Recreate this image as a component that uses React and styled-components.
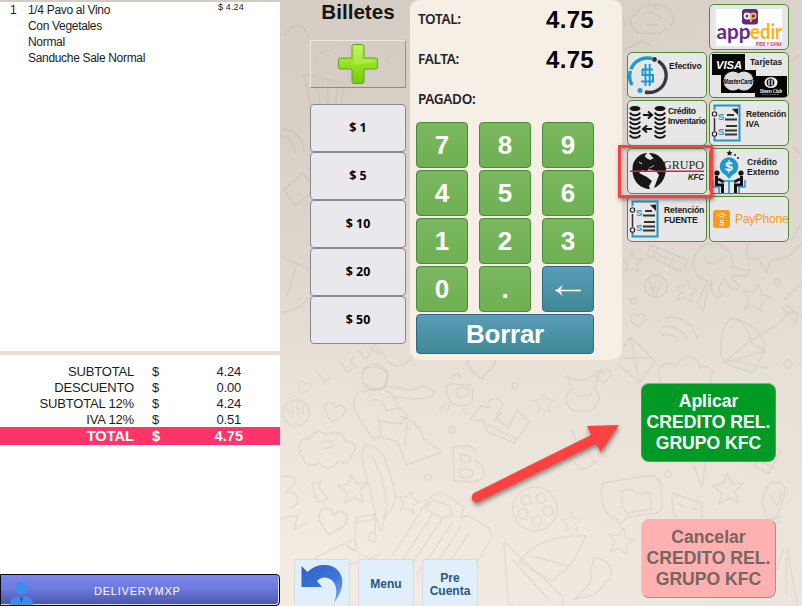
import React from "react";
import styled, { createGlobalStyle, css } from "styled-components";

const GlobalStyle = createGlobalStyle`
  *, *::before, *::after { box-sizing: border-box; }
  html, body { margin: 0; padding: 0; overflow: hidden; }
  button { font: inherit; margin: 0; padding: 0; }
`;

const sans = `"Liberation Sans", Arial, sans-serif`;
const humanist = `"Noto Sans", "Open Sans", sans-serif`;

const Screen = styled.main`
  position: relative;
  display: grid;
  grid-template-columns: 280px 1fr;
  width: 802px;
  height: 606px;
  overflow: hidden;
  font-family: ${sans};
  color: #111;
  background:
    linear-gradient(100deg, rgba(243, 236, 227, 0) 45%, rgba(228, 221, 212, 0.5) 100%),
    linear-gradient(178deg, #d5cdc3 0%, #d8d0c6 22%, #e0d8ce 45%, #ebe3d9 65%, #f3ebe2 88%, #f5ede4 100%);
`;

const Wallpaper = styled.svg`
  position: absolute;
  inset: 0;
  width: 802px;
  height: 606px;
  pointer-events: none;
`;

/* ---------- ticket ---------- */

const Ticket = styled.aside`
  position: relative;
  display: grid;
  grid-template-rows: 349px 219px 31px;
  padding-top: 2px;
  row-gap: 4px;
  height: 606px;
`;

const TicketLines = styled.section`
  background: #fff;
  display: grid;
  grid-template-columns: 18px 190px 1fr;
  align-content: start;
  padding-left: 10px;
  font-size: 12px;
  line-height: 16px;
  letter-spacing: -0.32px;
  color: #1c1c1c;
`;

const Price = styled.span`
  font-size: 9px;
  line-height: 10px;
  letter-spacing: 0.15px;
`;

const ItemNotes = styled.span`
  white-space: pre-line;
`;

const TicketFoot = styled.section`
  display: flex;
  flex-direction: column;
  background: #fff;
  padding-top: 8px;
`;

const SumRow = styled.div`
  display: grid;
  grid-template-columns: 134px 18px 1fr;
  align-items: center;
  height: ${(p) => (p.$grand ? 18 : 16)}px;
  padding-top: ${(p) => (p.$grand ? 0 : 1)}px;
  padding-right: ${(p) => (p.$grand ? 37 : 39)}px;
  font-size: ${(p) => (p.$grand ? 14.6 : 13)}px;
  font-weight: ${(p) => (p.$grand ? 700 : 400)};
  letter-spacing: ${(p) => (p.$grand ? 0 : -0.18)}px;
  line-height: 16px;
  color: ${(p) => (p.$grand ? "#fff" : "#1c1c1c")};
  background: ${(p) => (p.$grand ? "#ff3468" : "transparent")};
  text-align: right;

  & > :nth-child(2) { padding-left: 18px; text-align: left; }
`;

const UserBar = styled.button`
  display: flex;
  align-items: flex-end;
  width: 280px;
  height: 32px;
  margin-top: -4px;
  padding: 0 0 0 9px;
  border: 1px solid #080818;
  border-radius: 0 4px 4px 0;
  background: linear-gradient(#7c87ef, #6c79dd 45%, #4a56a8);
  box-shadow: inset -1px -1px 0 #d9dcf6;
  color: #fff;
  font-size: 11px;
  letter-spacing: 0.78px;

  svg { display: block; opacity: 0.9; }
  span { padding: 0 0 7px 61px; line-height: 13px; }
`;

/* ---------- work area ---------- */

const Work = styled.div`
  position: relative;
  display: grid;
  grid-template-columns: 96px 212px 162px;
  grid-template-rows: 360px 1fr;
  column-gap: 4px;
  padding-left: 30px;
  height: 606px;
`;

const Bills = styled.section`
  display: flex;
  flex-direction: column;
  align-items: stretch;
`;

const BillsTitle = styled.h2`
  margin: 0;
  height: 40px;
  text-align: center;
  font-size: 20.6px;
  line-height: 24px;
  color: #151515;
`;

const PlusButton = styled.button`
  display: grid;
  place-items: center;
  height: 48px;
  margin-bottom: 16px;
  background: rgba(212, 204, 195, 0.5);
  border: 1px solid;
  border-color: #eee9e2 #97918a #8f8981 #eee9e2;
`;

const BillButton = styled.button`
  height: 48px;
  border: 1px solid #86868d;
  border-radius: 4px;
  background: #e9e9ed;
  color: #000;
  padding-bottom: 2px;
  font-family: ${humanist};
  font-size: 12.4px;
  font-weight: 700;
`;

const PayPanel = styled.section`
  height: 360px;
  padding: 0 28px 0 6px;
  border-radius: 9px 9px 10px 10px;
  background: #f6efe5;
`;

const Amounts = styled.dl`
  display: grid;
  grid-template-rows: repeat(3, 40px);
  align-content: start;
  margin: 0;
  height: 122px;
`;

const Amount = styled.div`
  display: flex;
  justify-content: space-between;
  align-items: center;
  padding: 0 0 0 2px;

  dt {
    padding-bottom: 2px;
    font-family: ${humanist};
    font-size: 13.5px;
    font-weight: 600;
    letter-spacing: -0.3px;
    color: #222;
  }
  dd {
    margin: 0;
    font-size: 24px;
    font-weight: 700;
    letter-spacing: 0.3px;
    color: #000;
  }
`;

const Keypad = styled.div`
  display: grid;
  grid-template-columns: repeat(3, 52px);
  grid-template-rows: repeat(4, 46px) 40px;
  column-gap: 11px;
  row-gap: 2px;
`;

const blueKey = css`
  border-color: #2d6687;
  background: linear-gradient(#5b9cb9, #3f8a95);
`;

const Key = styled.button`
  display: grid;
  place-items: center;
  grid-column: span ${(p) => p.$span || 1};
  border: 1px solid #4b8a3a;
  border-radius: 4px;
  background: linear-gradient(#7ab860, #6fb052);
  color: #fff;
  font-size: 26px;
  font-weight: 700;
  line-height: 1;
  letter-spacing: ${(p) => (p.$span ? -0.25 : 0)}px;
  ${(p) => p.$blue && blueKey}
`;

const Methods = styled.section`
  display: grid;
  grid-template-columns: 80px 80px;
  grid-auto-rows: 46px;
  gap: 2px;
  padding-top: 4px;
  margin-left: 1px;
`;

const Method = styled.button`
  position: relative;
  display: flex;
  grid-column: ${(p) => (p.$second ? 2 : "auto")};
  border: 1px solid #4c8a35;
  border-radius: 5px;
  background: #e7e7e7;
  overflow: ${(p) => (p.$marked ? "visible" : "hidden")};

  & > svg { display: block; flex: none; }
`;

const MethodLabel = styled.span`
  flex: none;
  padding-top: ${(p) => p.$top}px;
  padding-left: ${(p) => p.$left || 0}px;
  font-size: 8.6px;
  font-weight: 700;
  line-height: 10.2px;
  letter-spacing: ${(p) => p.$track || 0}px;
  text-align: left;
  white-space: pre;
  color: #181818;
`;

const PayPhone = styled.span`
  align-self: center;
  font-size: 12.2px;
  letter-spacing: -0.38px;
  color: #fb9a1c;
`;

const Marker = styled.span`
  position: absolute;
  inset: -4px -7px -5px -10px;
  z-index: 2;
  border: 3px solid #ef4348;
  box-shadow: 1px 2px 4px rgba(60, 40, 40, 0.55), inset 1px 2px 3px rgba(60, 40, 40, 0.3);
  pointer-events: none;
`;

const Actions = styled.footer`
  grid-column: 1 / 4;
  display: flex;
  align-items: flex-end;
  justify-content: space-between;
  margin-left: -16px;
  padding-right: 12px;
`;

const NavButtons = styled.nav`
  display: flex;
  gap: 8px;
`;

const NavButton = styled.button`
  display: grid;
  place-items: center;
  width: 56px;
  height: 47px;
  padding-top: 3px;
  border: 1px solid #d5dde3;
  border-bottom: 0;
  border-radius: 3px 3px 0 0;
  background: #e0effb;
  color: #2b5680;
  font-size: 12px;
  font-weight: 700;
  line-height: 13px;
  white-space: pre-line;
`;

const Decisions = styled.div`
  display: flex;
  flex-direction: column;
  gap: 57px;
  padding-bottom: 8px;
`;

const Decision = styled.button`
  width: 135px;
  height: 79px;
  border: 1px solid;
  border-color: ${(p) => (p.$cancel ? "#eabbb6 #b98685 #b98685 #f0c4bf" : "#76b57c #5f9a66 #5f9a66 #3aa14e")};
  border-radius: 8px;
  background: ${(p) => (p.$cancel ? "#ffb0b0" : "#009a24")};
  color: ${(p) => (p.$cancel ? "#75665f" : "#fff")};
  font-size: 17.6px;
  font-weight: 700;
  line-height: 21px;
  white-space: pre-line;
`;

const Pointer = styled.svg`
  position: absolute;
  left: 180px;
  top: 410px;
  filter: drop-shadow(1px 3px 2px rgba(70, 55, 50, 0.55));
  pointer-events: none;
`;

/* ---------- drawings ---------- */

const Star = ({ x, y, s = 1, r = 0 }) => (
  <path
    transform={`translate(${x} ${y}) rotate(${r}) scale(${s})`}
    d="M0-14 4-5 14-4 6 3 9 13 0 8-9 13-6 3-14-4-4-5Z"
  />
);

const Heart = ({ x, y, s = 1, r = 0 }) => (
  <path
    transform={`translate(${x} ${y}) rotate(${r}) scale(${s})`}
    d="M0 10C-8 4-12-1-9-6-6-10-1-8 0-4 2-9 8-9 10-5 12 0 6 5 0 10Z"
  />
);

function Doodles() {
  return (
    <Wallpaper viewBox="0 0 802 606" fill="none" stroke="#8d8378" strokeOpacity=".13" strokeWidth="1.4" strokeLinejoin="round" strokeLinecap="round">
      <Star x={353} y={489} s={1.05} r={-5} />
      <Star x={409} y={502} s={0.8} r={12} />
      <Star x={544} y={403} s={0.7} />
      <Star x={571} y={522} s={0.7} />
      <Star x={621} y={541} s={0.95} r={12} />
      <Star x={728} y={489} s={1.1} r={-4} />
      <Star x={632} y={262} s={0.75} />
      <Star x={686} y={291} s={0.8} r={10} />
      <Star x={756} y={298} s={1} r={12} />
      <Heart x={304} y={387} s={0.65} r={15} />
      <Heart x={334} y={412} r={15} />
      <Heart x={332} y={521} s={1.4} r={12} />
      <Heart x={638} y={320} s={0.75} r={-5} />
      <Heart x={603} y={376} s={0.75} r={-12} />
      <Heart x={481} y={365} s={1.35} />
      {/* astronaut */}
      <circle cx="375" cy="377" r="13" />
      <path d="M363 370c8-5 18-4 24 3l-1 14c-8 3-18 1-22-4M361 391c-8 5-9 14-5 22l14 22c4 5 10 4 11-1l-3-18M364 392c10-5 24-4 30 6l6 14M385 386l27 4 12-4 6 3c5 1 5 7 0 8l-14 2-25-2M373 400c8-2 12 5 13 11l15-3 6 8-6 8-22-3M400 416c12 3 20 12 24 23l12 9c6 2 7 6-2 7l-28 10-8-23-20-6M407 423l-2 23" />
      {/* bird */}
      <path d="M446 386c6-5 14 0 19-1 8-2 8 4 8 11 0 9-8 10-16 9-9-1-10-12-11-19Zm5-8c3-6 10-5 10 1M446 403l-6 6m10-5-3 8m16-3 3 5M456 392c0-6 12-6 13-1 0 8-13 8-13 1" />
      {/* cloud and feather */}
      <path d="M301 452c-6-8 2-15 9-13 3-9 12-9 17-4 9-6 18-1 18 6 11 0 12 10 6 14 0 9-8 9-13 6-5 9-15 8-18 2-9 4-18 2-16-7-5 1-6-3-3-4M320 444c3-5 14-4 13 1-1 3-7 4-10 3M364 446c8-2 14 4 20 10l5 15 4 14 3 13-4 10-7 10-4 13c-6-12-6-23-9-32-1-12-15-41-8-53Zm8 10 10 22 5 28-4 13" />
      {/* notes, ticket, balloon letters */}
      <path d="m355 545 1-27 19-4 0 20M355 523l20-4M355 540c-8-2-9 9-3 10 5 0 5-5 3-10m20-7c-7-2-8 8-2 9 4 0 3-5 2-9M312 483l9-2-2 6 9 12-9 3-4-6Z" />
      <path d="m453 447 8-1c15-2 19 10 14 15 12 5 13 19-2 21l-19-1Zm8 7v8c12 2 14-8 0-8Zm-1 15v8c15 3 20-9 0-8Z" />
      <path d="m483 421-13-1 11-14 8 1c-5-12 17-10 13-1l-6 11 12 11 9-18 12 12-15 21-27-12Zm5 4 28 14m-21-18 7-9" />
      {/* suitcase */}
      <path d="m392 556 35-54c6-11 18-10 27-2l10 7-3 10 8-1 20 12 3 9-31 53M433 500l17 6 2 10-10 2-17-9ZM400 564l32-49m-24 55 34-51m-25 56 35-52m-26 57 35-53m-25 56 32-49" />
      {/* football, film reel, speech bubble */}
      <circle cx="535" cy="509" r="22" />
      <circle cx="526" cy="500" r="5" /><circle cx="541" cy="498" r="5" /><circle cx="548" cy="511" r="5" /><circle cx="537" cy="521" r="5" /><circle cx="523" cy="514" r="5" />
      <path d="m603 483 42-7c10-2 15 3 16 10l1 19c0 8-6 8-13 9l-21 3-8 8-4-7c-13 0-17-23-13-35Zm19 8 10-2 6 5 12-2 1 17-24 4-5-7Z" />
      {/* boats and sails */}
      <path d="m504 542 57 53 7 25M504 542l4 60 20 17M513 560l37 41M519 562c15-21 38-27 67-26l-15 29-19 16ZM530 556l40 10M594 558c13 0 20 9 16 20l-16 17-20 4c12-11 21-17 16-25Z" />
      <path d="m787 549 10 54m-14-53-15 44m18-36v36" />
      {/* monkey, ice cream, light bulb, mask */}
      <path d="M567 376c16 10 26 0 34-6l-7 19c9 6 5 17-5 22h-14c-13-7-10-17-3-23Zm7 17c8 6 18 2 18 0M672 493l29 10c4 15-2 28-17 23-11-6-12-18-12-33Zm7 11 6 3m7 1 5 2M766 491c0-12 20-12 19 0 0 10-8 15-7 25l-11 4c-1-10-9-18-1-29Zm4 3 7 12 5-14M769 521l12-4m-10 9 9-4" />
      <path d="m692 460 10 28 4-30Zm-2-2c-3-16 17-19 19-6m45 14 14-22 13 7-13 23Zm7-5 13 7m-9-13 12 7" />
      <path d="M588 427c-4 12-3 29 8 35l-13 8-16-14m5-26 9 26 10-22 6 14m5-18 4 21" />
      {/* octopus */}
      <path d="M708 281c-20-4-18-30-3-36 17-6 31 10 27 22l18 4-5 5-13-1c3 11 10 10 5 14-9 3-8-6-13-11-4 8-8 11-2 17l-5 4c-7-6-5-13-6-18-5 8-5 21-8 30l-5-8 8-19Zm-2-19 9 2m10-7-8 5" />
      {/* pencil and fruit */}
      <path d="m651 245 34 14c4 4-1 13-7 11l-31-15Zm6 3-4 10m21 0-5 9m-16-15 15 7" />
      <circle cx="656" cy="286" r="11" /><path d="m650 282 2 8m4-8-3 12m8-11-5 12" />
      <circle cx="296" cy="413" r="13" /><path d="m287 408 3 8m2-11 1 10m4-11 1 11m5-10v9" />
      {/* umbrella */}
      <path d="M731 318c-12 11-12 30-8 45l27-22 15 10c-1-20-17-29-34-33Zm-7 45 41-12-13 22Zm26-22 31-19c5-3 2-9 9-10 8 0 9 8 4 14m-57-7c9 7 12 14 14 21m-22 20 39 8M666 318c13-4 28 7 31 20m-34-11c11-3 22 5 24 13m-25-5c8-2 15 1 16 6" />
      {/* kite and clouds */}
      <path d="m615 359 16-22 24 24-16 22-21-19m13-27 8 46m-24-25h38M659 378c-3-15 10-18 17-11 6-16 24-11 24 1 11-4 15 3 10 11l3 9-52-1Z" />
      <path d="M750 242c-9 12-2 20 8 16l9 15 3-12 18-4 14-14M784 300l18-18m-16 23 16 12m-20-9 13 13" />
      {/* cupcake and loose shapes along the top */}
      <path d="M318 66c-6-10 4-18 12-15 9-15 28-5 23 6M304 75l8 40 27-1 6-31ZM316 80l5 31m7-32v33m10-33-3 32M385 61l20-22M284 35c11-15 22-10 24 3M282 129c15 0 21 11 22 22m-24-15c9-1 15 8 15 17M284 190l19-17 12 16-20 17ZM283 312c26-3 36-27 31-41l-32-14m14 9-9 30" />
      <path d="M643 7c23-8 37 6 27 20l-12 7-20-1c-12-8-8-18 5-26Zm8 5 11 6m-15 7h11M624 50l18-9 8 5m-24-20-4-10M656 8l-8-7M791 62l11-9m-8 94 8 9m-11 84 11-17" />
      <path d="M325 380l-7-6m5 10 7-6m11-15 7 9 5-4m1-11c-6 3-1 12 4 9m1-16 7 10 6-10m0-2 8 7m-2-12-6 4m3 4 5-3M415 350c-5 17-23 20-28 10l-6-10M281 477c18-5 17 9 4 15 17-2 15 16 5 16M282 519l16-4-4 15 13-8M314 558l30-14 26 15 10-5M314 558c20 9 41 7 58 0" />
      <circle cx="452" cy="430" r="3" /><circle cx="428" cy="477" r="3" /><circle cx="668" cy="474" r="3" /><circle cx="515" cy="386" r="3" /><circle cx="777" cy="282" r="3" /><circle cx="633" cy="301" r="3" /><circle cx="788" cy="364" r="4" />
    </Wallpaper>
  );
}

const UserIcon = () => (
  <svg width="23" height="25" viewBox="0 0 23 25" fill="#3f8df0">
    <ellipse cx="11.500" cy="8" rx="6" ry="7" />
    <path d="M0 25c0-6 3-8 8-9l3 4 3-4c6 1 9 3 9 9Z" />
    <path d="m10 18 1.500 5 1.500-5Z" fill="#254ba8" />
  </svg>
);

const PlusIcon = () => (
  <svg width="42" height="42" viewBox="0 0 42 42">
    <defs>
      <linearGradient id="plusFill" x1="0" y1="0" x2="0" y2="1">
        <stop offset="0" stopColor="#b9f04b" />
        <stop offset=".5" stopColor="#94e321" />
        <stop offset="1" stopColor="#72cc0b" />
      </linearGradient>
    </defs>
    <path d="M17 1.500h8q2 0 2 2V15h11.500q2 0 2 2v7q0 2-2 2H27v12.500q0 2-2 2h-8q-2 0-2-2V26H3.500q-2 0-2-2v-7q0-2 2-2H15V3.500q0-2 2-2Z" fill="url(#plusFill)" stroke="#659f22" />
    <path d="M17 3h8v13.500h13v3c-8 0-12 1-21 3Z" fill="#c7f56c" opacity=".4" />
  </svg>
);

const BackKeyIcon = () => (
  <svg width="28" height="14" viewBox="0 0 28 14" fill="none" stroke="#fff" strokeWidth="1.500">
    <path d="M1.500 8.500H27" />
    <path d="M8 3.500C6 6 4 7.500 1.500 8.500 4 9.500 6 11 8 13.500L6 8.500Z" fill="#fff" strokeWidth=".6" />
  </svg>
);

const UndoIcon = () => (
  <svg width="42" height="40" viewBox="0 0 42 40">
    <defs>
      <linearGradient id="undoFill" x1="0" y1="0" x2="1" y2="1">
        <stop offset="0" stopColor="#2f5fc8" />
        <stop offset=".6" stopColor="#3e78d8" />
        <stop offset="1" stopColor="#7fb4ee" />
      </linearGradient>
    </defs>
    <path d="M.5 1 6.500 7C15-1.500 29-3 37 5.500c8 9 4 22-4 32C37 27 36 17 28 13.500c-5-2-9-.5-12 2.500l5 6H.5Z" fill="url(#undoFill)" />
  </svg>
);

const AppedirLogo = () => (
  <svg width="78" height="44" viewBox="0 0 78 44">
    <rect x="6" y="4" width="66" height="37" fill="#fff" />
    <rect x="32" y="4" width="16" height="15.500" rx="3" fill="#5d2a88" />
    <g fill="none" strokeWidth="1.800">
      <circle cx="37" cy="11" r="2.500" stroke="#fff" /><path d="M39.600 8.500v6" stroke="#fff" />
      <circle cx="43.300" cy="11" r="2.500" stroke="#f9b233" /><path d="M40.900 10v7" stroke="#f9b233" />
    </g>
    <g fontFamily="Lato, sans-serif" fontSize="20" fontWeight="700">
      <text x="6.500" y="33.500" fill="#652b91" textLength="34" lengthAdjust="spacingAndGlyphs">app</text>
      <text x="40" y="33.500" fill="#fcb017" textLength="32" lengthAdjust="spacingAndGlyphs">edir</text>
    </g>
    <text x="46" y="41" fontFamily={sans} fontSize="6" fontWeight="700" fill="#c11970" textLength="26" lengthAdjust="spacingAndGlyphs">PIDE Y GANA</text>
  </svg>
);

const CashIcon = () => (
  <svg width="41" height="44" viewBox="0 0 41 44" fill="none">
    <path d="M24 5.500A18 18 0 0 0 4 32" stroke="#1b9ad2" strokeWidth="3.400" />
    <path d="M1 16.500l6 2" stroke="#e7e7e7" strokeWidth="1.500" />
    <path d="M30 8A17 17 0 0 1 17 39" stroke="#39383d" strokeWidth="3.400" />
    <circle cx="26.500" cy="6.500" r="2.400" fill="#333" />
    <circle cx="12" cy="37.500" r="2.500" fill="#1b9ad2" />
    <path d="M25 16.500H14.500v5.500H25V28.500H13M17.500 11v22M21.700 11v22" stroke="#1b9ad2" strokeWidth="2" />
  </svg>
);

const CardsLogo = () => (
  <svg width="78" height="44" viewBox="0 0 78 44">
    <rect x="2" y="1" width="33" height="21" fill="#050505" />
    <rect x="11" y="17" width="35" height="23" fill="#050505" />
    <rect x="45" y="23" width="32" height="21" fill="#050505" />
    <text x="6" y="16" fontFamily={sans} fontSize="11.500" fontWeight="700" fontStyle="italic" fill="#fff" textLength="26" lengthAdjust="spacingAndGlyphs">VISA</text>
    <circle cx="23" cy="28" r="9.500" fill="#dcdcdc" /><circle cx="34" cy="28" r="9.500" fill="#dcdcdc" />
    <text x="13.500" y="30.500" fontFamily={sans} fontSize="6.300" fontWeight="700" fontStyle="italic" fill="#050505" textLength="29" lengthAdjust="spacingAndGlyphs">MasterCard</text>
    <ellipse cx="61" cy="29.500" rx="6.500" ry="5.500" fill="#f3f3f3" />
    <circle cx="60.500" cy="29.500" r="3.900" fill="#111" />
    <path d="M59 26.500v6M62 26.500v6" stroke="#f3f3f3" strokeWidth="1.300" />
    <text x="50" y="40" fontFamily='"Liberation Serif", serif' fontSize="5.500" fontWeight="700" fill="#fff" textLength="22" lengthAdjust="spacingAndGlyphs">Diners Club</text>
    <path d="M52 41.500h17" stroke="#999" strokeWidth=".8" strokeDasharray="1.500 1" />
  </svg>
);

const CoinStack = ({ x }) => (
  <g transform={`translate(${x} 0)`} fill="none" stroke="#151515" strokeWidth="2">
    <ellipse cx="6" cy="7.500" rx="5" ry="2" fill="#151515" strokeWidth="1" />
    {[11.5, 16, 20.5, 25, 29.5, 34].map((y) => (
      <path key={y} d={`M1 ${y}c1 3.500 9 3.500 10 0`} />
    ))}
  </g>
);

const InventoryIcon = () => (
  <svg width="40" height="44" viewBox="0 0 40 44">
    <CoinStack x={1} />
    <CoinStack x={26} />
    <path d="M15 14h8m-3-3.500 4 3.500-4 3.500M24 28h-8m3-3.500L15 28l4 3.500" fill="none" stroke="#151515" strokeWidth="2" />
  </svg>
);

const WithholdingIcon = () => (
  <svg width="34" height="42" viewBox="0 0 34 42" fill="none">
    <path d="M4.500 9V4.500H29.500V39.500H4.500V35" stroke="#2294ca" strokeWidth="2" />
    <path d="M4.500 17v13" stroke="#333" strokeWidth="1.500" />
    <circle cx="4.500" cy="13" r="2.200" stroke="#222" strokeWidth="1.100" /><circle cx="4.500" cy="33" r="2.200" stroke="#222" strokeWidth="1.100" />
    <path d="M22 8l6-.5V14Z" fill="#222" />
    <path d="M17 14h7M15 18.500h12M16 25h11M15 29.500h12M15 33.500h12" stroke="#333" strokeWidth="1.800" />
    <g fill="#2294ca" fontFamily={sans} fontSize="9.500" fontWeight="700"><text x="8" y="18.500">S</text><text x="8" y="33.500">S</text></g>
  </svg>
);

const GroupLogo = () => (
  <svg width="78" height="44" viewBox="0 0 78 44">
    <circle cx="21" cy="22.500" r="16.500" fill="#e9e9e9" />
    <path d="M5 15c3-7 8-11 14-11l-2 4 5 3 4-2 2 6-7 4-2 4-5-2-3 3 8 4 5 4-3 5 1 3C12 40 2 31 5 15ZM21 4c9 0 15 6 17 15 0 10-5 17-12 20l5-13-3-4-8-2 6-3 1-6Z" fill="#171717" />
    <path d="m17 6 4 1-1 3m-9 3 3 2" fill="none" stroke="#e7e7e7" />
    <text x="35" y="20" fontFamily='"Liberation Serif", serif' fontSize="13" fill="#242424" textLength="41" lengthAdjust="spacingAndGlyphs">GRUPO</text>
    <rect x="2" y="21.500" width="74" height="1.500" fill="#d81f50" />
    <text x="60" y="30.500" fontFamily={sans} fontSize="8.300" fontWeight="700" fontStyle="italic" fill="#171717" textLength="16" lengthAdjust="spacingAndGlyphs">KFC</text>
  </svg>
);

const ExternalCreditIcon = () => (
  <svg width="37" height="44" viewBox="0 0 37 44" fill="none">
    <circle cx="19" cy="17.500" r="9.300" fill="#2098ce" /><path d="m14 24 5 6 5-6Z" fill="#2098ce" />
    <text x="14.700" y="22" fontFamily={sans} fontSize="12.500" fontWeight="700" fill="#fff">S</text>
    <path d="M19 11v13" stroke="#fff" />
    <path d="m19.500 1 1 2 2 .2-1.500 1.500.5 2-2-1-2 1 .5-2-1.500-1.500 2-.2Z" fill="#222" />
    <circle cx="25" cy="6" r="1" fill="#222" /><circle cx="28" cy="9" r="1" fill="#222" />
    <circle cx="7" cy="24" r="2.600" fill="#111" /><circle cx="31" cy="24" r="2.600" fill="#111" />
    <path d="M6.500 27v9h6v8M31.500 27v9h-6v8M8 30l6 3M30 30l-6 3" stroke="#111" strokeWidth="3" />
    <path d="M13 32h12M19 32v12M3 31v7h6v6M35 31v7h-6v6" stroke="#2098ce" strokeWidth="1.600" />
  </svg>
);

const PayPhoneIcon = () => (
  <svg width="25" height="44" viewBox="0 0 25 44" fill="none">
    <rect x="3" y="13" width="17" height="18" rx="3" fill="#fb9a1c" />
    <path d="M7.500 19c2-3 6-3 8 0M9 21c1.500-2 4-2 5 0M13.500 23.500h-3v2h3V28h-4" stroke="#fff" strokeWidth="1" />
  </svg>
);

const keys = ["7", "8", "9", "4", "5", "6", "1", "2", "3", "0", "."];
const bills = ["$ 1", "$ 5", "$ 10", "$ 20", "$ 50"];
const sums = [
  ["SUBTOTAL", "4.24"],
  ["DESCUENTO", "0.00"],
  ["SUBTOTAL 12%", "4.24"],
  ["IVA 12%", "0.51"],
  ["TOTAL", "4.75"],
];
const amounts = [["TOTAL:", "4.75"], ["FALTA:", "4.75"], ["PAGADO:", ""]];

const CardsMethod = styled(Method)`
  ${MethodLabel} { position: absolute; left: 40px; top: 0; }
`;

export default function App() {
  return (
    <Screen>
      <GlobalStyle />
      <Doodles />
      <Ticket>
        <TicketLines>
          <span>1</span>
          <ItemNotes>{"1/4 Pavo al Vino\nCon Vegetales\nNormal\nSanduche Sale Normal"}</ItemNotes>
          <Price>$ 4.24</Price>
        </TicketLines>
        <TicketFoot>
          {sums.map(([label, value]) => (
            <SumRow key={label} $grand={label === "TOTAL"}>
              <span>{label}</span>
              <span>$</span>
              <span>{value}</span>
            </SumRow>
          ))}
        </TicketFoot>
        <UserBar>
          <UserIcon />
          <span>DELIVERYMXP</span>
        </UserBar>
      </Ticket>

      <Work>
        <Bills>
          <BillsTitle>Billetes</BillsTitle>
          <PlusButton aria-label="+"><PlusIcon /></PlusButton>
          {bills.map((b) => <BillButton key={b}>{b}</BillButton>)}
        </Bills>

        <PayPanel>
          <Amounts>
            {amounts.map(([label, value]) => (
              <Amount key={label}><dt>{label}</dt><dd>{value}</dd></Amount>
            ))}
          </Amounts>
          <Keypad>
            {keys.map((k) => <Key key={k}>{k}</Key>)}
            <Key $blue><BackKeyIcon /></Key>
            <Key $blue $span={3}>Borrar</Key>
          </Keypad>
        </PayPanel>

        <Methods>
          <Method $second><AppedirLogo /></Method>
          <Method><CashIcon /><MethodLabel $top={8} $track={-0.1}>Efectivo</MethodLabel></Method>
          <CardsMethod><CardsLogo /><MethodLabel $top={4}>Tarjetas</MethodLabel></CardsMethod>
          <Method><InventoryIcon /><MethodLabel $top={5} $track={-0.35}>{"Crédito\nInventario"}</MethodLabel></Method>
          <Method><WithholdingIcon /><MethodLabel $top={8} $left={2} $track={-0.15}>{"Retención\nIVA"}</MethodLabel></Method>
          <Method $marked><GroupLogo /><Marker /></Method>
          <Method><ExternalCreditIcon /><MethodLabel $top={8}>{"Crédito\nExterno"}</MethodLabel></Method>
          <Method><WithholdingIcon /><MethodLabel $top={8} $left={2} $track={-0.15}>{"Retención\nFUENTE"}</MethodLabel></Method>
          <Method><PayPhoneIcon /><PayPhone>PayPhone</PayPhone></Method>
        </Methods>

        <Actions>
          <NavButtons>
            <NavButton aria-label="↶"><UndoIcon /></NavButton>
            <NavButton>Menu</NavButton>
            <NavButton>{"Pre\nCuenta"}</NavButton>
          </NavButtons>
          <Decisions>
            <Decision>{"Aplicar\nCREDITO REL.\nGRUPO KFC"}</Decision>
            <Decision $cancel>{"Cancelar\nCREDITO REL.\nGRUPO KFC"}</Decision>
          </Decisions>
        </Actions>

        <Pointer width="170" height="100" viewBox="460 410 170 100">
          <path d="m619 425-18.500 27-4-8.500L478 502c-5 2-9-5-4-9l117-58-4-9Z" fill="#fb4240" />
        </Pointer>
      </Work>
    </Screen>
  );
}
